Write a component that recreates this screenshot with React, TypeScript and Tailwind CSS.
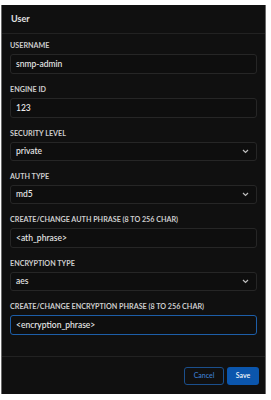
import React from "react";

const font = { fontFamily: "Lato, 'Open Sans', sans-serif" };

function Label({ children }: { children: React.ReactNode }) {
  return (
    <div className="text-[7.2px] font-bold leading-[10px] text-[#cdcdcd] mb-[3px]">
      {children}
    </div>
  );
}

function TextField({ label, value, focused }: { label: string; value: string; focused?: boolean }) {
  return (
    <div>
      <Label>{label}</Label>
      <div
        className={`h-[20px] rounded-[3px] border flex items-center px-[5px] text-[8.5px] font-medium text-[#ececec] bg-[#0e0e0e] ${
          focused ? "border-[#1d5ea8]" : "border-[#262626]"
        }`}
      >
        {value}
      </div>
    </div>
  );
}

function SelectField({ label, value }: { label: string; value: string }) {
  return (
    <div>
      <Label>{label}</Label>
      <div className="h-[19px] rounded-[3px] border border-[#262626] bg-[#0e0e0e] flex items-center justify-between px-[5px] text-[8.5px] font-medium text-[#ececec]">
        <span>{value}</span>
        <svg width="7" height="5" viewBox="0 0 7 5" className="mr-[2px]">
          <polyline points="1,1 3.5,3.5 6,1" fill="none" stroke="#bdbdbd" strokeWidth="1.2" />
        </svg>
      </div>
    </div>
  );
}

export default function App() {
  return (
    <div className="w-[271px] h-[400px] bg-white pt-[5px] pl-[1px]" style={font}>
      <div className="w-[265px] h-[389px] bg-[#101010] border-x border-[#6a6a6a] flex flex-col">
        <div className="h-[29px] border-b border-[#222] flex items-center px-[9px] text-[9px] font-bold text-[#e2e2e2]">
          User
        </div>
        <div className="flex-1 px-2 pt-[7px] flex flex-col gap-[11px]">
          <TextField label="USERNAME" value="snmp-admin" />
          <TextField label="ENGINE ID" value="123" />
          <SelectField label="SECURITY LEVEL" value="private" />
          <SelectField label="AUTH TYPE" value="md5" />
          <TextField label="CREATE/CHANGE AUTH PHRASE (8 TO 256 CHAR)" value="<ath_phrase>" />
          <SelectField label="ENCRYPTION TYPE" value="aes" />
          <TextField label="CREATE/CHANGE ENCRYPTION PHRASE (8 TO 256 CHAR)" value="<encryption_phrase>" focused />
        </div>
        <div className="h-[38px] border-t border-[#222] flex items-center justify-end gap-[3px] pr-[6px]">
          <button className="h-[18px] w-[40px] rounded-[3px] border border-[#1b4f8c] text-[7px] font-medium text-[#3d7fd0]">
            Cancel
          </button>
          <button className="h-[18px] w-[32px] rounded-[3px] bg-[#0b56ad] text-[7px] font-medium text-white">
            Save
          </button>
        </div>
      </div>
    </div>
  );
}
